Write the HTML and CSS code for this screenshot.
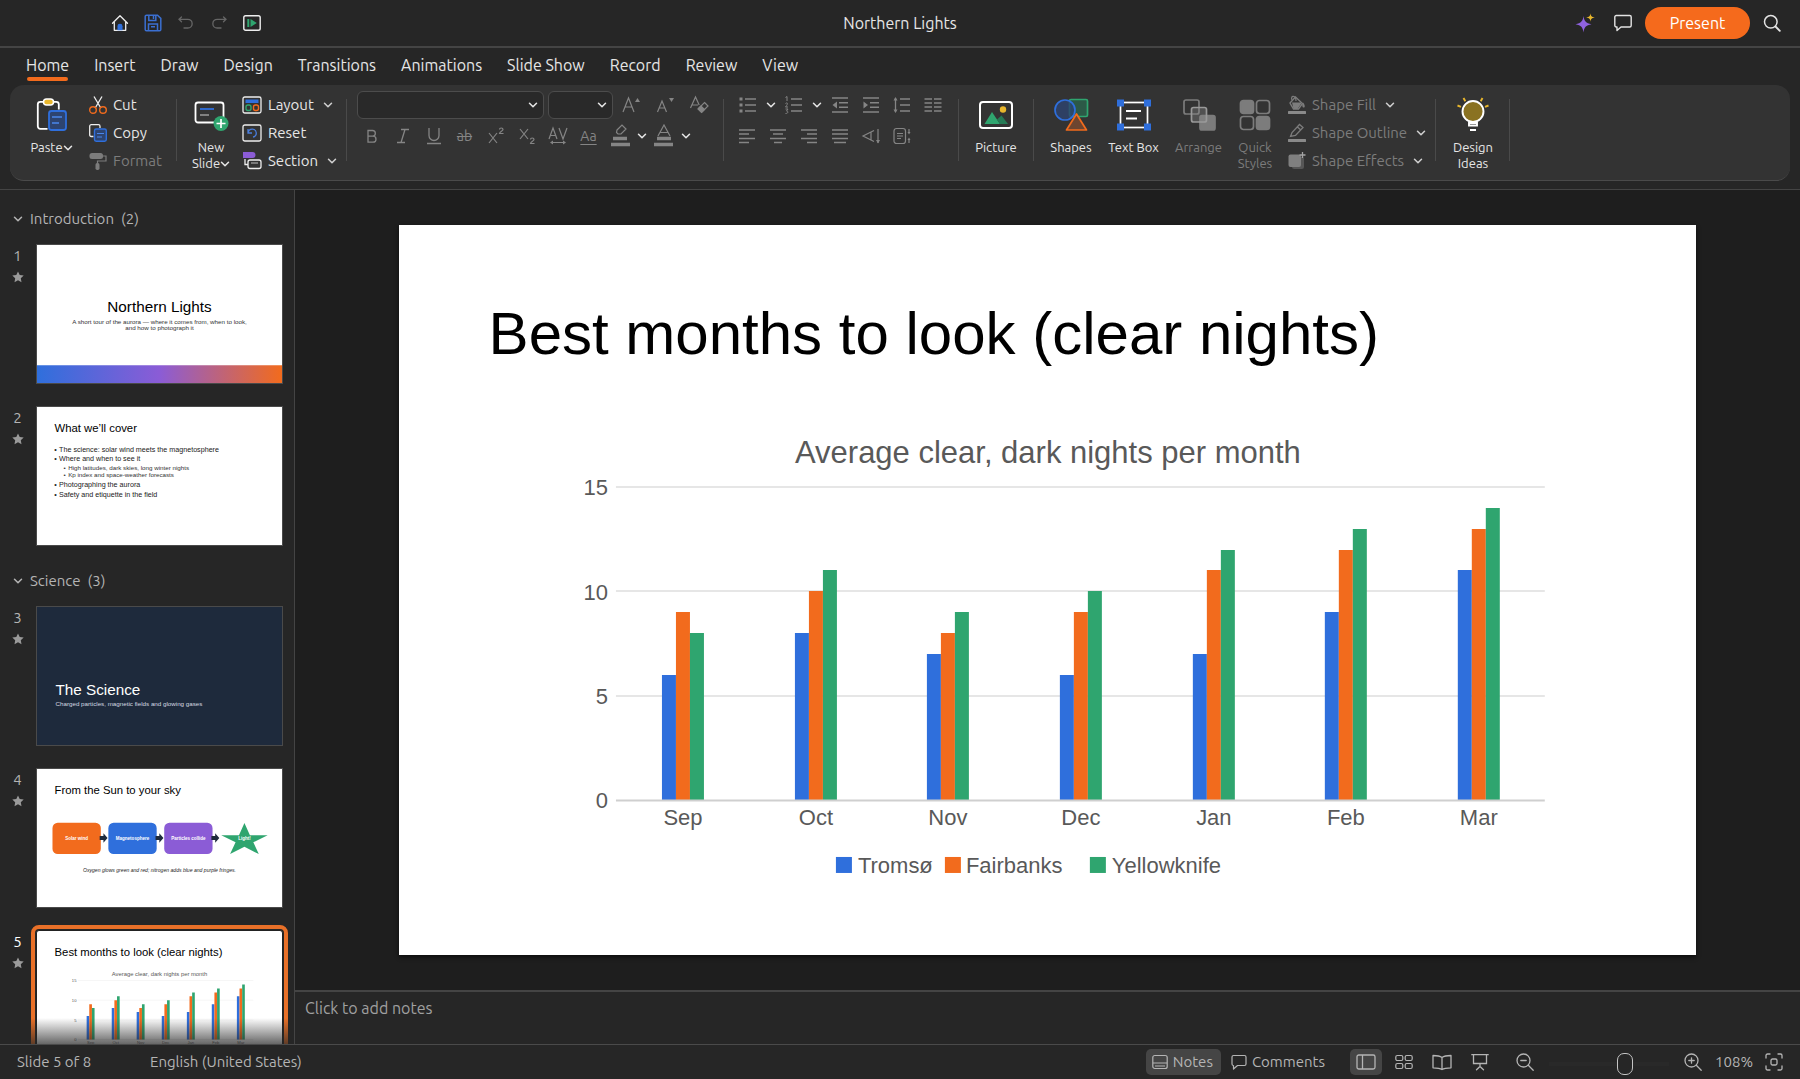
FILE: index.html
```html
<!DOCTYPE html>
<html lang="en">
<head>
<meta charset="utf-8">
<title>Northern Lights</title>
<link rel="stylesheet" href="styles.css">
</head>
<body>
<svg class="sprite" aria-hidden="true">
  <symbol id="chev" viewBox="0 0 10 10"><path d="M1.500 3.200 5 6.800 8.500 3.200" fill="none" stroke="currentColor" stroke-width="1.500" stroke-linecap="round" stroke-linejoin="round"/></symbol>
  <symbol id="star" viewBox="0 0 12 12"><path d="M6 .5 7.700 4.100 11.700 4.600 8.800 7.300 9.500 11.300 6 9.300 2.500 11.300 3.200 7.300 .3 4.600 4.300 4.100z" fill="currentColor"/></symbol>
</svg>

<header class="titlebar">
  <div class="titlebar__tools">
    <button class="tool" aria-label="Home"><svg width="18" height="18" viewBox="0 0 18 18" fill="none"><path d="M1.500 9.200 9 1.700l7.500 7.500M3.300 8v8.300h11.400V8" stroke="#eee" stroke-width="1.300" stroke-linejoin="round" stroke-linecap="round"/><path d="M6.500 16.300v-4a2.500 2.500 0 0 1 5 0v4z" fill="#2f6fdc"/></svg></button>
    <button class="tool" aria-label="Save"><svg width="18" height="18" viewBox="0 0 18 18" fill="none" stroke="#3b6fd0" stroke-width="1.500"><path d="M2.500 1.200h11l3.300 3.200v11a1.300 1.300 0 0 1-1.300 1.300h-13a1.300 1.300 0 0 1-1.300-1.300V2.500a1.300 1.300 0 0 1 1.300-1.300z"/><path d="M4.800 1.500v5h7v-5M4.500 16.500V10h9v6.500M9.500 2v3M7 12.700h4"/></svg></button>
    <button class="tool tool--off" aria-label="Undo"><svg width="18" height="18" viewBox="0 0 18 18" fill="none" stroke="currentColor" stroke-width="1.300" stroke-linecap="round"><path d="M4.500 3 2 5.300l2.500 2.400M2.300 5.300h8.500a4.300 4.300 0 0 1 0 8.700H7"/></svg></button>
    <button class="tool tool--off" aria-label="Redo"><svg width="18" height="18" viewBox="0 0 18 18" fill="none" stroke="currentColor" stroke-width="1.300" stroke-linecap="round"><path d="M13.500 3 16 5.300l-2.500 2.400M15.700 5.300H7.200a4.300 4.300 0 0 0 0 8.700H11"/></svg></button>
    <button class="tool" aria-label="Play from start"><svg width="18" height="18" viewBox="0 0 18 18" fill="none"><rect x=".8" y="1.800" width="16.400" height="14.400" rx="1.800" stroke="#eee" stroke-width="1.400"/><path d="M4.300 5h2v8h-2zM7.500 5l6.300 4-6.300 4z" fill="#2fa56f"/></svg></button>
  </div>
  <h1 class="titlebar__name">Northern Lights</h1>
  <div class="titlebar__actions">
    <button class="tool" aria-label="Assistant"><svg width="20" height="20" viewBox="0 0 20 20"><path d="M8.500 3c.6 5 2.300 7.200 8 8.300-5.700 1-7.400 3.200-8 8.200-.6-5-2.300-7.200-8-8.200C6.200 10.200 7.900 8 8.500 3z" fill="#8f62e0"/><path d="M15.500 .2c.3 2.900 1.200 3.800 4.300 4.300-3.100.5-4 1.400-4.300 4.300-.3-2.900-1.200-3.800-4.300-4.300 3.100-.5 4-1.400 4.300-4.300z" fill="#e8b62c"/></svg></button>
    <button class="tool" aria-label="Comments"><svg width="18" height="18" viewBox="0 0 18 18" fill="none" stroke="#e4e4e4" stroke-width="1.400" stroke-linejoin="round"><path d="M2.300 1.500h13.400A1.500 1.500 0 0 1 17.200 3v8.500a1.500 1.500 0 0 1-1.500 1.500H7L3 16.500V13h-.7a1.500 1.500 0 0 1-1.500-1.500V3a1.500 1.500 0 0 1 1.500-1.500z"/></svg></button>
    <button class="present">Present</button>
    <button class="tool" aria-label="Search"><svg width="18" height="18" viewBox="0 0 18 18" fill="none" stroke="#e4e4e4" stroke-width="1.500" stroke-linecap="round"><circle cx="7.800" cy="7.800" r="6.300"/><path d="m12.500 12.500 4.300 4.300" stroke-width="1.900"/></svg></button>
  </div>
</header>

<nav class="tabs">
  <a class="tab tab--on" href="#home">Home</a>
  <a class="tab" href="#insert">Insert</a>
  <a class="tab" href="#draw">Draw</a>
  <a class="tab" href="#design">Design</a>
  <a class="tab" href="#transitions">Transitions</a>
  <a class="tab" href="#animations">Animations</a>
  <a class="tab" href="#slideshow">Slide Show</a>
  <a class="tab" href="#record">Record</a>
  <a class="tab" href="#review">Review</a>
  <a class="tab" href="#view">View</a>
</nav>

<section class="ribbon" aria-label="Home tools">
  <div class="group group--clipboard">
    <button class="big">
      <svg width="34" height="36" viewBox="0 0 34 36" fill="none"><rect x="2.800" y="4.800" width="21" height="27" rx="2.500" stroke="#fff" stroke-width="1.800"/><rect x="12.500" y="12.500" width="20" height="21" fill="#333"/><rect x="14" y="14" width="17" height="19" rx="2.500" fill="#2d4470" stroke="#2f6fdc" stroke-width="1.800"/><path d="M17 20h10M17 26h7" stroke="#4a86ea" stroke-width="1.500"/><rect x="8.500" y="2" width="10" height="6" rx="3" fill="#e8b62c" stroke="#fff" stroke-width="1.500"/></svg>
      <span>Paste<svg class="chev"><use href="#chev"/></svg></span>
    </button>
    <div class="stack">
      <button class="row"><svg width="18" height="18" viewBox="0 0 18 18" fill="none"><path d="M5 .5 11.800 12M13 .5 6.200 12" stroke="#eee" stroke-width="1.300"/><circle cx="4" cy="14" r="3.300" stroke="#f26b1d" stroke-width="1.400"/><circle cx="14" cy="14" r="3.300" stroke="#f26b1d" stroke-width="1.400"/></svg>Cut</button>
      <button class="row"><svg width="18" height="18" viewBox="0 0 18 18" fill="none"><path d="M4.500 12.500H2.200a1.500 1.500 0 0 1-1.500-1.500V2.200A1.500 1.500 0 0 1 2.200.7h7.300A1.500 1.500 0 0 1 11 2.200V4" stroke="#eee" stroke-width="1.300"/><rect x="5.500" y="5" width="11.800" height="12.300" rx="1.700" fill="#2d4470" stroke="#2f6fdc" stroke-width="1.400"/><path d="M8 9.500h7M8 13h5" stroke="#4a86ea" stroke-width="1.200"/></svg>Copy</button>
      <button class="row" disabled><svg width="18" height="18" viewBox="0 0 18 18" fill="none"><rect x=".5" y="1" width="13.500" height="6" rx="2.500" fill="#7c7c7c"/><path d="M14 4h3v5H8.500v3" stroke="#7c7c7c" stroke-width="1.200"/><rect x="6.500" y="11" width="4" height="7" rx="1.700" fill="#7c7c7c"/></svg>Format</button>
    </div>
  </div>

  <div class="group group--slides">
    <button class="big big--two">
      <svg width="36" height="36" viewBox="0 0 36 36" fill="none"><rect x="2.500" y="5.500" width="28" height="20" rx="2.500" stroke="#fff" stroke-width="1.800"/><path d="M7 12h14" stroke="#2f6fdc" stroke-width="1.800"/><path d="M7 18h9" stroke="#8a8a8a" stroke-width="1.800"/><circle cx="28" cy="26.500" r="7.500" fill="#2fa56f"/><path d="M28 22v9M23.500 26.500h9" stroke="#fff" stroke-width="1.700"/></svg>
      <span>New<br>Slide<svg class="chev"><use href="#chev"/></svg></span>
    </button>
    <div class="stack">
      <button class="row"><svg width="20" height="18" viewBox="0 0 20 18" fill="none"><rect x="1" y="1" width="18" height="16" rx="1.800" stroke="#eee" stroke-width="1.300"/><path d="M3.500 3.500h13V7h-13z" fill="#2f6fdc"/><rect x="4" y="9" width="5" height="5.500" rx="2" stroke="#2fa56f" stroke-width="1.400"/><rect x="11.500" y="9" width="5" height="5.500" rx="2" stroke="#f26b1d" stroke-width="1.400"/></svg>Layout<svg class="chev"><use href="#chev"/></svg></button>
      <button class="row"><svg width="20" height="18" viewBox="0 0 20 18" fill="none"><rect x="1" y="1" width="18" height="16" rx="1.800" stroke="#eee" stroke-width="1.300"/><path d="M6 5v4h4M6.300 8.500A4 4 0 1 1 11 13" stroke="#4a7ddb" stroke-width="1.300"/></svg>Reset</button>
      <button class="row"><svg width="20" height="18" viewBox="0 0 20 18" fill="none"><path d="M1 0h9.500a3 3 0 0 1 0 6H1z" fill="#8b5cd6"/><path d="M3 7v5.500h3" stroke="#eee" stroke-width="1.300"/><rect x="6" y="8" width="13" height="8.500" rx="2" stroke="#eee" stroke-width="1.300"/><path d="M9 11h7" stroke="#aaa" stroke-width="1.200"/></svg>Section<svg class="chev"><use href="#chev"/></svg></button>
    </div>
  </div>

  <div class="group group--font">
    <div class="line">
      <label class="pick pick--font"><select aria-label="Font"><option></option></select><svg class="chev"><use href="#chev"/></svg></label>
      <label class="pick pick--size"><select aria-label="Font size"><option></option></select><svg class="chev"><use href="#chev"/></svg></label>
      <button class="ic ic--wide" disabled aria-label="Grow font"><svg width="20" height="20" viewBox="0 0 20 20" fill="none" stroke="currentColor" stroke-width="1.200"><path d="M2 17 7.500 3 13 17M4 12h7"/><path d="M14 7h5L16.500 3z" fill="currentColor" stroke="none"/></svg></button>
      <button class="ic ic--wide" disabled aria-label="Shrink font"><svg width="20" height="20" viewBox="0 0 20 20" fill="none" stroke="currentColor" stroke-width="1.200"><path d="M2.500 17 7 6l4.500 11M4 13h6"/><path d="M14 3h5l-2.500 4z" fill="currentColor" stroke="none"/></svg></button>
      <button class="ic ic--wide" disabled aria-label="Clear formatting"><svg width="20" height="20" viewBox="0 0 20 20" fill="none" stroke="currentColor" stroke-width="1.200"><path d="M1.500 13 6.500 2l3.700 8M3 10h6"/><path d="M15.500 7.500 19 11l-6 6-3.500-3.500z"/><path d="m12 11-3 3 3.500 3.500 3-3z" fill="currentColor"/></svg></button>
    </div>
    <div class="line line--format">
      <button class="ic" disabled aria-label="Bold"><svg width="20" height="20" viewBox="0 0 20 20" fill="none" stroke="currentColor" stroke-width="1.300"><path d="M6 4.500h4.500a2.700 2.700 0 0 1 0 5.700H6zM6 10.200h5a3 3 0 0 1 0 6H6z"/></svg></button>
      <button class="ic" disabled aria-label="Italic"><svg width="20" height="20" viewBox="0 0 20 20" fill="none" stroke="currentColor" stroke-width="1.300"><path d="M8 3.500h8M4 16.500h8M12 3.500l-4 13"/></svg></button>
      <button class="ic" disabled aria-label="Underline"><svg width="20" height="20" viewBox="0 0 20 20" fill="none" stroke="currentColor" stroke-width="1.300"><path d="M5 2v7.500a5 5 0 0 0 10 0V2M3 17.500h14"/></svg></button>
      <button class="ic ic--strike" disabled>ab</button>
      <button class="ic" disabled aria-label="Superscript"><svg width="20" height="20" viewBox="0 0 20 20" fill="none" stroke="currentColor" stroke-width="1.200"><path d="m3 7 8 10M11 7 3 17M13.500 3.500c0-2 3.500-2 3.500 0 0 1.500-3.500 2-3.500 4h4"/></svg></button>
      <button class="ic" disabled aria-label="Subscript"><svg width="20" height="20" viewBox="0 0 20 20" fill="none" stroke="currentColor" stroke-width="1.200"><path d="m3 3 8 10M11 3 3 13M13.500 13.500c0-2 3.500-2 3.500 0 0 1.500-3.500 2-3.500 4h4"/></svg></button>
      <button class="ic" disabled aria-label="Character spacing"><svg width="20" height="20" viewBox="0 0 20 20" fill="none" stroke="currentColor" stroke-width="1.200"><path d="M1 13 5 2l4 11M2.500 9.500h5M11 2l4 11 4-11M3 16.500h14"/><path d="M5 14.500v4l-3-2zM15 14.500v4l3-2z" fill="currentColor" stroke="none"/></svg></button>
      <button class="ic ic--case" disabled>Aa</button>
      <button class="ic" disabled aria-label="Highlight"><svg width="20" height="24" viewBox="0 0 20 24" fill="none" stroke="currentColor" stroke-width="1.200"><path d="M7 6 12 1l4 4-5 5H8L6.500 8.500z"/><path d="M3 14.500h14M1 20.500h19" stroke-width="3.500"/></svg></button>
      <button class="ic ic--drop" aria-label="Highlight colours"><svg class="chev"><use href="#chev"/></svg></button>
      <button class="ic" disabled aria-label="Font colour"><svg width="20" height="24" viewBox="0 0 20 24" fill="none" stroke="currentColor" stroke-width="1.200"><path d="m4 12 6-11 6 11M6 8.500h8"/><path d="M3 14.500h14M0 20.500h19" stroke-width="3.500"/></svg></button>
      <button class="ic ic--drop" aria-label="Font colours"><svg class="chev"><use href="#chev"/></svg></button>
    </div>
  </div>

  <div class="group group--para">
    <div class="line">
      <button class="ic" disabled aria-label="Bullets"><svg width="20" height="20" viewBox="0 0 20 20" fill="none" stroke="currentColor" stroke-width="1.400"><path d="M7 4h11M7 10h11M7 16h11"/><path d="M1.500 4h3M1.500 10h3M1.500 16h3" stroke-width="2.800"/></svg></button>
      <button class="ic ic--drop" aria-label="Bullet styles"><svg class="chev"><use href="#chev"/></svg></button>
      <button class="ic" disabled aria-label="Numbering"><svg width="20" height="20" viewBox="0 0 20 20" fill="none" stroke="currentColor" stroke-width="1.400"><path d="M7 4h11M7 10h11M7 16h11"/><path d="M1.500 2.500 3 1.500V6M1.500 8.500c2-1.500 3 0 0 3.500H4M1.500 14H4l-1.500 2c2 0 2 2.500-1 2.500" stroke-width="1"/></svg></button>
      <button class="ic ic--drop" aria-label="Number styles"><svg class="chev"><use href="#chev"/></svg></button>
      <button class="ic" disabled aria-label="Outdent"><svg width="20" height="20" viewBox="0 0 20 20" fill="none" stroke="currentColor" stroke-width="1.400"><path d="M2 3h16M9 7.700h9M9 12.300h9M2 17h16"/><path d="M7 6.500v7L2.500 10z" fill="currentColor" stroke="none"/></svg></button>
      <button class="ic" disabled aria-label="Indent"><svg width="20" height="20" viewBox="0 0 20 20" fill="none" stroke="currentColor" stroke-width="1.400"><path d="M2 3h16M9 7.700h9M9 12.300h9M2 17h16"/><path d="M2.500 6.500v7L7 10z" fill="currentColor" stroke="none"/></svg></button>
      <button class="ic" disabled aria-label="Line spacing"><svg width="20" height="20" viewBox="0 0 20 20" fill="none" stroke="currentColor" stroke-width="1.300"><path d="M8 4h10M8 10h10M8 16h10M3.500 3v14"/><path d="M1.500 5.500 3.500 2l2 3.500zM1.500 14.500l2 3.500 2-3.500z" fill="currentColor" stroke="none"/></svg></button>
      <button class="ic" disabled aria-label="Columns"><svg width="20" height="20" viewBox="0 0 20 20" fill="none" stroke="currentColor" stroke-width="1.400"><path d="M1.500 4H9M11 4h7.500M1.500 8H9M11 8h7.500M1.500 12H9M11 12h7.500M1.500 16H9M11 16h7.500"/></svg></button>
    </div>
    <div class="line line--format">
      <button class="ic" disabled aria-label="Align left"><svg width="20" height="20" viewBox="0 0 20 20" stroke="currentColor" stroke-width="1.400"><path d="M2 4h16M2 8h10M2 12.500h16M2 16.500h10"/></svg></button>
      <button class="ic" disabled aria-label="Centre"><svg width="20" height="20" viewBox="0 0 20 20" stroke="currentColor" stroke-width="1.400"><path d="M2 4h16M5 8h10M2 12.500h16M6 16.500h8"/></svg></button>
      <button class="ic" disabled aria-label="Align right"><svg width="20" height="20" viewBox="0 0 20 20" stroke="currentColor" stroke-width="1.400"><path d="M2 4h16M8 8h10M2 12.500h16M8 16.500h10"/></svg></button>
      <button class="ic" disabled aria-label="Justify"><svg width="20" height="20" viewBox="0 0 20 20" stroke="currentColor" stroke-width="1.400"><path d="M2 4h16M2 8h16M2 12.500h16M4 16.500h12"/></svg></button>
      <button class="ic" disabled aria-label="Text direction"><svg width="20" height="20" viewBox="0 0 20 20" fill="none" stroke="currentColor" stroke-width="1.200"><path d="M13 4.500 2 10l11 5.500M10 6v8M17 3v14"/><path d="m15 14 2 3.500 2-3.500z" fill="currentColor" stroke="none"/></svg></button>
      <button class="ic" disabled aria-label="Align text"><svg width="20" height="20" viewBox="0 0 20 20" fill="none" stroke="currentColor" stroke-width="1.200"><rect x="2" y="2.500" width="11.500" height="15" rx="2.500"/><path d="M5 7.500h6M5 10h6M5 12.500h4M17 3v4M17 13v4"/><path d="m15.500 6 1.500 2.500L18.500 6zM15.500 14l1.500-2.500 1.500 2.500z" fill="currentColor" stroke="none"/></svg></button>
    </div>
  </div>

  <div class="group group--picture">
    <button class="big"><svg width="36" height="36" viewBox="0 0 36 36" fill="none"><rect x="2" y="5" width="32" height="26" rx="3" stroke="#fff" stroke-width="2"/><path d="m6.500 27 7.500-12L22 27z" fill="#2fa56f"/><path d="m19 22.500 4.500-4L30 27h-8z" fill="#257a55"/><circle cx="25" cy="12.500" r="3.200" fill="#e8b62c"/></svg><span>Picture</span></button>
  </div>

  <div class="group group--draw">
    <button class="big"><svg width="36" height="36" viewBox="0 0 36 36" fill="none" stroke-width="1.700"><rect x="16.500" y="2.500" width="18" height="17" rx="1.500" fill="#2c5947" stroke="#2fa56f"/><circle cx="12" cy="13" r="10" fill="#2d4470" fill-opacity=".8" stroke="#2f6fdc"/><path d="M23.500 17 33.500 33h-20z" fill="#6d4530" stroke="#f26b1d" stroke-linejoin="round"/></svg><span>Shapes</span></button>
    <button class="big big--wide"><svg width="36" height="36" viewBox="0 0 36 36" fill="none"><rect x="4.500" y="5.500" width="27" height="25" stroke="#fff" stroke-width="1.700"/><path d="M10 14h15M10 21.500h11" stroke="#fff" stroke-width="1.900"/><path d="M1 2.500h7v7H1zM28 2.500h7v7h-7zM1 26.500h7v7H1zM28 26.500h7v7h-7z" fill="#2f6fdc"/></svg><span>Text Box</span></button>
    <button class="big big--arrange" disabled><svg width="36" height="36" viewBox="0 0 36 36" fill="none" stroke="#7c7c7c" stroke-width="1.700"><rect x="3" y="3" width="15" height="14" rx="2"/><rect x="19" y="18.500" width="15" height="14.500" rx="2" fill="#7c7c7c"/><rect x="10.500" y="10.500" width="15" height="14.500" rx="2" fill="#8a8a8a" fill-opacity=".35" stroke="#999"/></svg><span>Arrange</span></button>
    <button class="big big--two" disabled><svg width="36" height="36" viewBox="0 0 36 36" fill="none" stroke="#7c7c7c" stroke-width="1.700"><rect x="3.500" y="3.500" width="13" height="13" rx="3" fill="#7c7c7c"/><rect x="19.500" y="3.500" width="13" height="13" rx="3"/><rect x="3.500" y="19.500" width="13" height="13" rx="3"/><rect x="19.500" y="19.500" width="13" height="13" rx="3" fill="#7c7c7c"/></svg><span>Quick<br>Styles</span></button>
    <div class="stack">
      <button class="row" aria-disabled="true"><svg width="18" height="20" viewBox="0 0 18 20" fill="none"><path d="M2 8 7.500 2l7 6.500-4 5.500h-5z" stroke="#7c7c7c" stroke-width="1.300"/><path d="M4 7.500h10L9.500 14h-4zM15 7.500c2.500 3 2 5 .7 5s-2-2-.7-5z" fill="#7c7c7c"/><path d="M4 5c-2-5 4-5 4 1" stroke="#7c7c7c" stroke-width="1.200"/><path d="M1 17.500h16" stroke="#8a8a8a" stroke-width="3" stroke-linecap="round"/></svg>Shape Fill<svg class="chev"><use href="#chev"/></svg></button>
      <button class="row" aria-disabled="true"><svg width="18" height="20" viewBox="0 0 18 20" fill="none"><path d="M2.500 13.500 4 9.500 11.500 1.500l3.500 3-7.500 8zM9.500 4l3.300 3" stroke="#7c7c7c" stroke-width="1.300"/><path d="M1 17.500h16" stroke="#8a8a8a" stroke-width="3" stroke-linecap="round"/></svg>Shape Outline<svg class="chev"><use href="#chev"/></svg></button>
      <button class="row" aria-disabled="true"><svg width="18" height="20" viewBox="0 0 18 20" fill="none"><rect x="4" y="6" width="12" height="12" rx="2" fill="#565656"/><rect x=".5" y="3.500" width="12.500" height="12.500" rx="2" fill="#808080"/><path d="M14.500 1v6M11.500 4h6" stroke="#a5a5a5" stroke-width="1.300"/></svg>Shape Effects<svg class="chev"><use href="#chev"/></svg></button>
    </div>
  </div>

  <div class="group group--ideas">
    <button class="big big--two"><svg width="36" height="36" viewBox="0 0 36 36" fill="none"><circle cx="18" cy="14.500" r="10.500" fill="#8a7222" stroke="#fff" stroke-width="1.900"/><path d="M14 24.500v4h8v-4M14 26h8M15 33h6" stroke="#fff" stroke-width="1.900"/><path d="m8.500 1 1.800 3.200M27.500 1l-1.800 3.200M2.500 8.500l3.500 1.300M33.500 8.500 30 9.800" stroke="#e8b62c" stroke-width="1.900"/></svg><span>Design<br>Ideas</span></button>
  </div>
</section>

<main class="workspace">
  <aside class="slides" aria-label="Slides">
    <h2 class="section"><svg class="chev"><use href="#chev"/></svg>Introduction<span>(2)</span></h2>
    <ol class="thumbs">
      <li class="thumb"><div class="thumb__no">1<svg class="star"><use href="#star"/></svg></div>
        <button class="thumb__pic" aria-label="Slide 1"><svg viewBox="0 0 1298 730"><defs><linearGradient id="band"><stop offset="0" stop-color="#2f6fdc"/><stop offset=".5" stop-color="#8b5cd6"/><stop offset="1" stop-color="#f26b1d"/></linearGradient></defs><g text-anchor="middle"><text x="649" y="354" font-size="81">Northern Lights</text><g font-size="33" fill="#333"><text x="649" y="417">A short tour of the aurora — where it comes from, when to look,</text><text x="649" y="451">and how to photograph it</text></g></g><path d="M0 636h1298v94H0z" fill="url(#band)"/></svg></button></li>
      <li class="thumb"><div class="thumb__no">2<svg class="star"><use href="#star"/></svg></div>
        <button class="thumb__pic" aria-label="Slide 2"><svg viewBox="0 0 1298 730"><text x="93" y="133" font-size="60">What we’ll cover</text><g font-size="38" fill="#222"><text x="92" y="236">•</text><text x="117" y="236">The science: solar wind meets the magnetosphere</text><text x="92" y="288">•</text><text x="117" y="288">Where and when to see it</text><text x="92" y="423">•</text><text x="117" y="423">Photographing the aurora</text><text x="92" y="476">•</text><text x="117" y="476">Safety and etiquette in the field</text></g><g font-size="33" fill="#333"><text x="141" y="331">•</text><text x="165" y="331">High latitudes, dark skies, long winter nights</text><text x="141" y="372">•</text><text x="165" y="372">Kp index and space-weather forecasts</text></g></svg></button></li>
    </ol>
    <h2 class="section"><svg class="chev"><use href="#chev"/></svg>Science<span>(3)</span></h2>
    <ol class="thumbs">
      <li class="thumb"><div class="thumb__no">3<svg class="star"><use href="#star"/></svg></div>
        <button class="thumb__pic" aria-label="Slide 3"><svg viewBox="0 0 1298 730"><path d="M0 0h1298v730H0z" fill="#1e2a3c"/><text x="98" y="468" font-size="81" fill="#fff">The Science</text><text x="98" y="522" font-size="33" fill="#d5dae2">Charged particles, magnetic fields and glowing gases</text></svg></button></li>
      <li class="thumb"><div class="thumb__no">4<svg class="star"><use href="#star"/></svg></div>
        <button class="thumb__pic" aria-label="Slide 4"><svg viewBox="0 0 1298 730"><text x="93" y="133" font-size="60">From the Sun to your sky</text><rect x="82" y="284" width="256" height="166" rx="28" fill="#f26b1d"/><rect x="378" y="284" width="256" height="166" rx="28" fill="#2f6fdc"/><rect x="674" y="284" width="256" height="166" rx="28" fill="#8b5cd6"/><path id="arrow" d="M332 354h20v-14l22 25-22 25v-14h-20z" fill="#1e2a3c"/><use href="#arrow" x="296"/><use href="#arrow" x="592"/><path d="m1099 286 29 64h94l-76 38 29 62-76-38-76 38 29-62-76-38h94z" fill="#2fa56f"/><g text-anchor="middle" font-size="24" font-weight="700" fill="#fff"><text x="210" y="374">Solar wind</text><text x="506" y="374">Magnetosphere</text><text x="802" y="374">Particles collide</text><text x="1099" y="374">Light!</text></g><text x="649" y="546" text-anchor="middle" font-size="27" font-style="italic" fill="#222">Oxygen glows green and red; nitrogen adds blue and purple fringes.</text></svg></button></li>
      <li class="thumb thumb--on"><div class="thumb__no">5<svg class="star"><use href="#star"/></svg></div>
        <button class="thumb__pic" aria-label="Slide 5"><svg viewBox="0 0 1298 730"><text x="93" y="133" font-size="60">Best months to look (clear nights)</text><use href="#chart"/></svg></button></li>
    </ol>
  </aside>

  <div class="editor">
    <div class="canvas">
      <article class="slide">
        <h2 class="slide__title">Best months to look (clear nights)</h2>
        <svg class="slide__chart" viewBox="0 170 1298 560" role="img" aria-label="Average clear, dark nights per month">
          <g id="chart" font-size="22" fill="#595959">
            <text x="649" y="238" font-size="31" text-anchor="middle">Average clear, dark nights per month</text>
            <path d="M217 262h929M217 366h929M217 471h929" stroke="#e6e6e6" stroke-width="2"/>
            <path d="M263 575V450h14V575zM396 575V408h14V575zM528 575V429h14V575zM661 575V450h14V575zM794 575V429h14V575zM926 575V387h14V575zM1059 575V345h14V575z" fill="#2f6fdc"/>
            <path d="M277 575V387h14V575zM410 575V366h14V575zM542 575V408h14V575zM675 575V387h14V575zM808 575V345h14V575zM940 575V325h14V575zM1073 575V304h14V575z" fill="#f26b1d"/>
            <path d="M291 575V408h14V575zM424 575V345h14V575zM556 575V387h14V575zM689 575V366h14V575zM822 575V325h14V575zM954 575V304h14V575zM1087 575V283h14V575z" fill="#2fa56f"/>
            <path d="M217 575.500h929" stroke="#cfcfcf" stroke-width="2"/>
            <g text-anchor="end"><text x="209" y="270">15</text><text x="209" y="375">10</text><text x="209" y="479">5</text><text x="209" y="583">0</text></g>
            <g text-anchor="middle"><text x="284" y="600">Sep</text><text x="417" y="600">Oct</text><text x="549" y="600">Nov</text><text x="682" y="600">Dec</text><text x="815" y="600">Jan</text><text x="947" y="600">Feb</text><text x="1080" y="600">Mar</text></g>
            <path d="M437 632h16v16h-16z" fill="#2f6fdc"/><text x="459" y="648">Tromsø</text>
            <path d="M546 632h16v16h-16z" fill="#f26b1d"/><text x="567" y="648">Fairbanks</text>
            <path d="M691 632h16v16h-16z" fill="#2fa56f"/><text x="713" y="648">Yellowknife</text>
          </g>
        </svg>
      </article>
    </div>
    <textarea class="notes" aria-label="Notes" placeholder="Click to add notes"></textarea>
  </div>
</main>

<footer class="status">
  <span class="status__slide">Slide 5 of 8</span>
  <span>English (United States)</span>
  <div class="status__tools">
    <button class="pill pill--on"><svg width="16" height="16" viewBox="0 0 16 16" fill="none" stroke="currentColor" stroke-width="1.200"><rect x=".8" y="1.500" width="14.400" height="13" rx="2"/><path d="M1 9h14M3 12h10"/></svg>Notes</button>
    <button class="pill"><svg width="16" height="16" viewBox="0 0 16 16" fill="none" stroke="currentColor" stroke-width="1.200" stroke-linejoin="round"><path d="M2.500 1.500h11a1.500 1.500 0 0 1 1.500 1.500v7a1.500 1.500 0 0 1-1.500 1.500H6.500L2.500 15v-3.500A1.500 1.500 0 0 1 1 10V3a1.500 1.500 0 0 1 1.500-1.500z"/></svg>Comments</button>
    <div class="views">
      <button class="view view--on" aria-label="Normal view"><svg width="20" height="18" viewBox="0 0 20 18" fill="none" stroke="currentColor" stroke-width="1.300"><rect x="1" y="2" width="18" height="14" rx="1.800"/><path d="M6.500 2v14"/></svg></button>
      <button class="view" aria-label="Slide sorter"><svg width="18" height="18" viewBox="0 0 18 18" fill="none" stroke="currentColor" stroke-width="1.200"><rect x=".8" y="2.500" width="7" height="5" rx="1.500"/><rect x="10.200" y="2.500" width="7" height="5" rx="1.500"/><rect x=".8" y="10.500" width="7" height="5" rx="1.500"/><rect x="10.200" y="10.500" width="7" height="5" rx="1.500"/></svg></button>
      <button class="view" aria-label="Reading view"><svg width="20" height="18" viewBox="0 0 20 18" fill="none" stroke="currentColor" stroke-width="1.300" stroke-linejoin="round"><path d="M10 4.500C8 3 5 2.500 1 2.500v12.300c4 0 7 .2 9 1.700 2-1.500 5-1.700 9-1.700V2.500c-4 0-7 .5-9 2zV16"/></svg></button>
      <button class="view" aria-label="Slide show"><svg width="18" height="18" viewBox="0 0 18 18" fill="none" stroke="currentColor" stroke-width="1.300" stroke-linecap="round"><path d="M.8 1.700h16.400M2.500 2v8.500h13V2M9 10.500v3M5.500 16.800 9 13.500l3.500 3.300"/></svg></button>
    </div>
    <button class="view" aria-label="Zoom out"><svg width="18" height="18" viewBox="0 0 18 18" fill="none" stroke="currentColor" stroke-width="1.300" stroke-linecap="round"><circle cx="7.500" cy="7.500" r="6.500"/><path d="m12.300 12.300 4.900 4.900M4.800 7.500h5.400"/></svg></button>
    <input class="zoom" type="range" min="10" max="200" value="135" aria-label="Zoom">
    <button class="view" aria-label="Zoom in"><svg width="18" height="18" viewBox="0 0 18 18" fill="none" stroke="currentColor" stroke-width="1.300" stroke-linecap="round"><circle cx="7.500" cy="7.500" r="6.500"/><path d="m12.300 12.300 4.900 4.900M4.800 7.500h5.400M7.500 4.800v5.400"/></svg></button>
    <span class="status__zoom">108%</span>
    <button class="view view--fit" aria-label="Fit slide"><svg width="18" height="18" viewBox="0 0 18 18" fill="none" stroke="currentColor" stroke-width="1.300" stroke-linecap="round"><path d="M1 5V2.500A1.500 1.500 0 0 1 2.500 1H5M13 1h2.500A1.500 1.500 0 0 1 17 2.500V5M17 13v2.500a1.500 1.500 0 0 1-1.500 1.500H13M5 17H2.500A1.500 1.500 0 0 1 1 15.500V13"/><rect x="6" y="6" width="6" height="6" rx="1.500"/></svg></button>
  </div>
</footer>
</body>
</html>
```

FILE: styles.css
```css
:root {
  --bar: #262626;
  --ribbon: #333;
  --line: #444;
  --text: #e6e6e6;
  --dim: #7c7c7c;
  --muted: #b4b4b4;
  --accent: #f26b1d;
}

* { box-sizing: border-box; }

body {
  margin: 0;
  height: 100vh;
  display: flex;
  flex-direction: column;
  overflow: hidden;
  background: var(--bar);
  color: var(--text);
  font: 15px/20px Ubuntu, "Noto Sans", sans-serif;
}

button {
  border: 0;
  padding: 0;
  background: none;
  color: inherit;
  font: inherit;
}

svg { display: block; flex: none; }
.sprite { position: absolute; width: 0; height: 0; }
.chev { width: 10px; height: 10px; }

/* Title bar */
.titlebar {
  display: grid;
  grid-template-columns: 1fr auto 1fr;
  align-items: center;
  height: 48px;
  border-bottom: 2px solid var(--line);
  font-size: 16px;
}
.titlebar__tools { display: flex; gap: 15px; padding-left: 111px; }
.titlebar__name { margin: 0; font-size: 16px; font-weight: 400; }
.titlebar__actions { display: flex; justify-content: flex-end; align-items: center; gap: 13px; padding-right: 19px; }
.tool { min-width: 18px; }
.tool--off { color: #666; }
.titlebar__actions .tool:first-child { margin-right: 6px; }
.present {
  width: 105px;
  height: 32px;
  border-radius: 16px;
  background: #f56a1c;
  color: #fff;
}

/* Ribbon tabs */
.tabs { display: flex; gap: 25px; height: 37px; padding: 7px 26px 0; font-size: 16px; }
.tab { height: 26px; border-bottom: 4px solid transparent; color: var(--text); text-decoration: none; }
.tab--on { position: relative; }
.tab--on::after {
  content: "";
  position: absolute;
  left: 1px;
  right: 1px;
  bottom: -4px;
  height: 4px;
  border-radius: 2px;
  background: var(--accent);
}

/* Ribbon */
.ribbon {
  display: flex;
  height: 96px;
  margin: 0 10px 8px;
  border-bottom: 1px solid #4a4a4a;
  border-radius: 14px;
  background: var(--ribbon);
}
.group { position: relative; display: flex; padding-top: 6px; }
.group::after {
  content: "";
  position: absolute;
  right: 0;
  top: 14px;
  width: 1px;
  height: 62px;
  background: #4a4a4a;
}
.group--clipboard { width: 167px; padding-left: 13px; }
.group--slides { width: 170px; padding-left: 5px; }
.group--font { width: 377px; padding-left: 10px; flex-direction: column; gap: 3px; }
.group--para { width: 235px; padding-left: 8px; flex-direction: column; gap: 3px; }
.group--picture { width: 75px; padding-left: 8px; }
.group--draw { width: 402px; padding-left: 8px; }
.group--ideas { width: 74px; padding-left: 8px; }

.big {
  display: flex;
  flex-direction: column;
  align-items: center;
  width: 58px;
  padding-top: 6px;
  font-size: 13px;
  line-height: 16px;
  white-space: nowrap;
}
.big > svg { height: 36px; }
.big > span { margin-top: 6px; text-align: center; }
.big .chev { display: inline-block; vertical-align: -1px; }
.big--wide { width: 67px; }
.big--arrange { width: 63px; }
.big:disabled, .row:disabled, .row[aria-disabled] { color: var(--dim); }
.row .chev { margin-left: 3px; color: #d0d0d0; }

.stack { display: flex; flex-direction: column; }
.row { display: flex; align-items: center; gap: 6px; height: 28px; white-space: nowrap; }
.group--clipboard .stack { padding-left: 9px; }
.group--clipboard .big { width: 57px; }
.group--slides .stack { padding-left: 2px; }
.group--draw .stack { padding-left: 8px; }
.group--draw .big--two { width: 50px; }

.line { display: flex; align-items: center; height: 28px; }
.line--format { margin-left: -1px; }
.ic { display: grid; place-items: center; width: 31px; height: 24px; color: var(--text); }
.ic:disabled { color: #858585; }
.ic--wide { width: 34px; }
.ic--drop { width: 13px; }
.ic--strike { font-size: 14px; text-decoration: line-through; }
.ic--case { font-size: 14px; text-decoration: underline; text-underline-offset: 3px; }
.group--para .line:first-child .ic--drop { width: 15px; }

.pick { position: relative; display: block; height: 28px; }
.pick select {
  width: 100%;
  height: 100%;
  border: 1px solid #4c4c4c;
  border-radius: 6px;
  background: #292929;
  appearance: none;
}
.pick .chev { position: absolute; right: 6px; top: 9px; }
.pick--font { width: 187px; margin-right: 4px; }
.pick--size { width: 65px; margin-right: 1px; }

/* Slide panel */
.workspace { display: flex; flex: 1; min-height: 0; border-top: 1px solid var(--line); }
.slides {
  position: relative;
  width: 295px;
  flex: none;
  overflow: hidden;
  padding-top: 14px;
  border-right: 1px solid var(--line);
}
.slides::after {
  content: "";
  position: absolute;
  inset: auto 0 0 0;
  height: 26px;
  background: linear-gradient(rgba(38, 38, 38, 0), rgba(38, 38, 38, .7));
}
.section {
  display: flex;
  align-items: center;
  gap: 7px;
  height: 30px;
  margin: 0;
  padding-left: 13px;
  color: var(--muted);
  font-size: 15px;
  font-weight: 400;
}
.thumbs { display: flex; flex-direction: column; gap: 22px; margin: 10px 0 20px; padding: 0; list-style: none; }
.thumb { display: flex; }
.thumb__no { display: flex; flex-direction: column; align-items: center; gap: 5px; width: 36px; padding: 2px 1px 0 0; color: var(--muted); }
.thumb--on .thumb__no { color: #fff; }
.star { width: 12px; height: 12px; color: #9a9a9a; }
.thumb__pic { width: 247px; border: 1px solid #4a4a4a; background: #fff; }
.thumb__pic svg { width: 100%; height: 138px; font-family: "Liberation Sans", Arial, sans-serif; }
.thumb--on .thumb__pic { border-color: #222; outline: 4px solid #e87028; outline-offset: 1px; border-radius: 3px; }

/* Editor */
.editor { display: flex; flex: 1; flex-direction: column; min-width: 0; }
.canvas { display: flex; flex: 1; justify-content: center; min-height: 0; padding: 35px; background: #1e1e1e; }
.slide {
  display: flex;
  flex-direction: column;
  height: 100%;
  aspect-ratio: 16 / 9;
  background: #fff;
  color: #000;
  font-family: "Liberation Sans", Arial, sans-serif;
  box-shadow: 0 2px 4px #0d0d0d;
}
.slide__title { margin: 0; padding: 73px 90px 25px; font-size: 60px; font-weight: 400; line-height: 72px; white-space: nowrap; }
.slide__chart { flex: 1; width: 100%; min-height: 0; }
.notes {
  height: 54px;
  padding: 6px 10px;
  border: 0;
  border-top: 2px solid var(--line);
  background: var(--bar);
  color: var(--text);
  font: inherit;
  font-size: 16px;
  resize: none;
}
.notes::placeholder { color: #a0a0a0; }

/* Status bar */
.status {
  display: flex;
  align-items: center;
  height: 35px;
  padding: 0 17px;
  border-top: 1px solid #4a4a4a;
  color: var(--muted);
}
.status__slide { width: 133px; }
.status__tools { display: flex; align-items: center; margin-left: auto; }
.pill { display: flex; align-items: center; gap: 5px; height: 26px; padding: 0 8px 0 6px; border-radius: 5px; }
.pill--on, .view--on { background: #454545; }
.pill + .pill { margin-left: 4px; }
.views { display: flex; gap: 6px; margin: 0 13px 0 17px; }
.view { display: grid; place-items: center; width: 32px; height: 26px; border-radius: 5px; }
.view--fit { width: 18px; }
.status__zoom { width: 38px; margin: 0 12px 0 6px; white-space: nowrap; }
.zoom { width: 120px; height: 24px; margin: 3px 8px 0; appearance: none; background: none; }
.zoom::-webkit-slider-runnable-track { height: 22px; background: linear-gradient(#292929, #292929) center / 100% 4px no-repeat; }
.zoom::-webkit-slider-thumb { width: 16px; height: 22px; border: 1px solid #c4c4c4; border-radius: 7px; background: var(--bar); appearance: none; }
```
